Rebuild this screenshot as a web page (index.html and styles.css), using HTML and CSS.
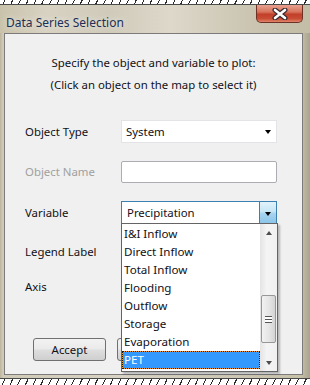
FILE: index.html
```html
<html>
<head>
    <title>Data Series Selection</title>
    <link rel="stylesheet" href="styles.css">
</head>
<body>
    <div class="hatch hatchTop"></div>
    <div class="frame">
        <div class="titleBar">
            <div class="titleText">Data Series Selection</div>
            <div class="closeBtn">
                <svg width="18" height="12" viewBox="0 0 18 12">
                    <path d="M4 2 L14 10 M14 2 L4 10" stroke="#3a2a30" stroke-width="5" stroke-linecap="round"/>
                    <path d="M4 2 L14 10 M14 2 L4 10" stroke="#ffffff" stroke-width="2.6" stroke-linecap="round"/>
                </svg>
            </div>
        </div>
        <div class="client">
            <div class="intro">
                <div>Specify the object and variable to plot:</div>
                <div>(Click an object on the map to select it)</div>
            </div>

            <div class="row rowFirst">
                <div class="label">Object Type</div>
                <div class="combo">
                    <span class="comboText">System</span>
                    <span class="comboArrow"></span>
                </div>
            </div>

            <div class="row">
                <div class="label disabled">Object Name</div>
                <div class="textBox"></div>
            </div>

            <div class="row rowVar">
                <div class="label">Variable</div>
                <div class="combo comboFocus">
                    <span class="comboText">Precipitation</span>
                    <span class="comboBtn"><span class="comboArrow"></span></span>

                    <div class="dropList">
                        <div class="items">
                            <div class="item">I&amp;I Inflow</div>
                            <div class="item">Direct Inflow</div>
                            <div class="item">Total Inflow</div>
                            <div class="item">Flooding</div>
                            <div class="item">Outflow</div>
                            <div class="item">Storage</div>
                            <div class="item">Evaporation</div>
                            <div class="item selected">PET</div>
                        </div>
                        <div class="scrollBar">
                            <div class="scrollArrow"><span class="triUp"></span></div>
                            <div class="scrollTrack">
                                <div class="thumb"><span class="grip"></span></div>
                            </div>
                            <div class="scrollArrow"><span class="triDown"></span></div>
                        </div>
                    </div>
                </div>
            </div>

            <div class="row rowLegend">
                <div class="label">Legend Label</div>
                <div class="textBox"></div>
            </div>

            <div class="row rowAxis">
                <div class="label">Axis</div>
                <div class="combo">
                    <span class="comboText"></span>
                    <span class="comboArrow"></span>
                </div>
            </div>

            <div class="buttons">
                <div class="button">Accept</div>
                <div class="button"></div>
            </div>
        </div>
    </div>
    <div class="hatch hatchBottom"></div>
</body>
</html>
```

FILE: styles.css
```css
body {
    margin: 0;
    width: 310px;
    height: 385px;
    overflow: hidden;
    background-color: #cbc4ae;
    font-family: "Noto Sans", "Open Sans", sans-serif;
    font-size: 11.4px;
    color: #101018;
}

.hatch {
    background: repeating-linear-gradient(115deg, #ffffff 0 4px, #2a2a2a 4px 5px, #ffffff 5px 7px);
}

.hatchTop {
    height: 4px;
    border-bottom: 1px solid #4a4a4a;
}

.hatchBottom {
    height: 6px;
    border-top: 1px solid #4a4a4a;
}

.frame {
    height: 373px;
    display: flex;
    flex-direction: column;
    background: linear-gradient(90deg, #bdb59c 0, #d0cab8 3px, #d8d3c4 40%, #cfc9b7 70%, #c8c1aa 97%, #a9a38f 100%);
}

.titleBar {
    height: 28px;
    display: flex;
    justify-content: space-between;
    align-items: flex-start;
    background: linear-gradient(90deg, #c9c2ab 0, #d7d2c2 15%, #cfcab9 35%, #ddd8ca 55%, #cbc5b2 80%, #c3bca6 100%);
}

.titleText {
    margin-left: 6px;
    margin-top: 10px;
    line-height: 16px;
    font-size: 12px;
    color: #1c2f55;
    text-shadow: 0 0 6px rgba(255, 255, 255, 0.9);
}

.closeBtn {
    width: 45px;
    height: 17px;
    margin-right: 7px;
    display: flex;
    align-items: center;
    justify-content: center;
    border: 1px solid #6e3125;
    border-top: none;
    border-radius: 0 0 5px 5px;
    background: linear-gradient(#e7a18f 0, #d8755e 40%, #c2402a 55%, #c94c33 80%, #e0866c 100%);
}

.client {
    flex: 1;
    margin: 0 7px 3px 4px;
    background-color: #f0f0f0;
    border: 1px solid #7b7b7b;
    padding: 18px 0 0 20px;
}

.intro {
    padding-right: 20px;
    text-align: center;
    line-height: 22px;
}

.row {
    display: flex;
    align-items: center;
    height: 23px;
    margin-top: 17px;
}

.rowFirst {
    margin-top: 24px;
}

.rowVar {
    margin-top: 18px;
}

.rowLegend {
    margin-top: 16px;
}

.rowAxis {
    margin-top: 12px;
}

.label {
    width: 96px;
}

.disabled {
    color: #a0a0a0;
}

.combo {
    position: relative;
    box-sizing: border-box;
    width: 156px;
    height: 23px;
    display: flex;
    align-items: center;
    background-color: #ffffff;
    border: 1px solid #e2e3e6;
}

.comboText {
    flex: 1;
    padding-left: 4px;
}

.comboArrow {
    width: 0;
    height: 0;
    margin-right: 5px;
    border-left: 3.5px solid transparent;
    border-right: 3.5px solid transparent;
    border-top: 4px solid #000000;
}

.comboFocus {
    border-color: #3c7fb1;
}

.comboFocus .comboText {
    padding-left: 5px;
}

.comboBtn {
    align-self: stretch;
    width: 16px;
    display: flex;
    align-items: center;
    justify-content: center;
    border-left: 1px solid #3c7fb1;
    background: linear-gradient(#e2f2fb 0, #c8e6f6 45%, #a6d4ef 55%, #8dc5e8 100%);
}

.comboBtn .comboArrow {
    margin: 2px 0 0 0;
}

.textBox {
    box-sizing: border-box;
    width: 156px;
    height: 22px;
    background-color: #ffffff;
    border: 1px solid #abadb3;
    border-radius: 2px;
}

.dropList {
    position: absolute;
    left: -1px;
    top: 21px;
    box-sizing: border-box;
    width: 157px;
    height: 149px;
    display: flex;
    background-color: #ffffff;
    border: 1px solid #646464;
    box-shadow: 2px 2px 2px rgba(0, 0, 0, 0.25);
    z-index: 2;
}

.items {
    flex: 1;
    padding-top: 1px;
}

.item {
    height: 18px;
    line-height: 18px;
    padding-left: 2px;
    white-space: nowrap;
    font-size: 11.6px;
}

.selected {
    background-color: #3399ff;
    color: #ffffff;
    box-shadow: inset 0 0 0 1px #f09a2a;
    outline: 1px dotted #1a1a1a;
    outline-offset: -1px;
}

.scrollBar {
    width: 17px;
    display: flex;
    flex-direction: column;
    background: linear-gradient(90deg, #e4e4e4, #f4f4f4 40%, #f0f0f0);
}

.scrollArrow {
    height: 17px;
    display: flex;
    align-items: center;
    justify-content: center;
}

.triUp, .triDown {
    width: 0;
    height: 0;
    border-left: 3.5px solid transparent;
    border-right: 3.5px solid transparent;
}

.triUp {
    border-bottom: 4px solid #4d4d4d;
}

.triDown {
    border-top: 4px solid #4d4d4d;
}

.scrollTrack {
    flex: 1;
    display: flex;
    flex-direction: column;
    justify-content: flex-end;
    padding: 0 1px 11px 1px;
}

.thumb {
    box-sizing: border-box;
    height: 48px;
    display: flex;
    align-items: center;
    justify-content: center;
    border: 1px solid #979797;
    border-radius: 2px;
    background: linear-gradient(90deg, #f2f2f2, #e6e6e6 50%, #d4d4d4);
}

.grip {
    width: 7px;
    height: 5px;
    border-top: 1px solid #555555;
    border-bottom: 1px solid #555555;
    background: linear-gradient(#ffffff 0 2px, #555555 2px 3px, #ffffff 3px);
}

.buttons {
    display: flex;
    gap: 11px;
    margin-top: 40px;
    padding-left: 8px;
}

.button {
    box-sizing: border-box;
    width: 73px;
    height: 23px;
    display: flex;
    align-items: center;
    justify-content: center;
    border: 1px solid #707070;
    border-radius: 3px;
    background: linear-gradient(#f2f2f2 0, #ebebeb 45%, #dddddd 55%, #cfcfcf 100%);
}
```
